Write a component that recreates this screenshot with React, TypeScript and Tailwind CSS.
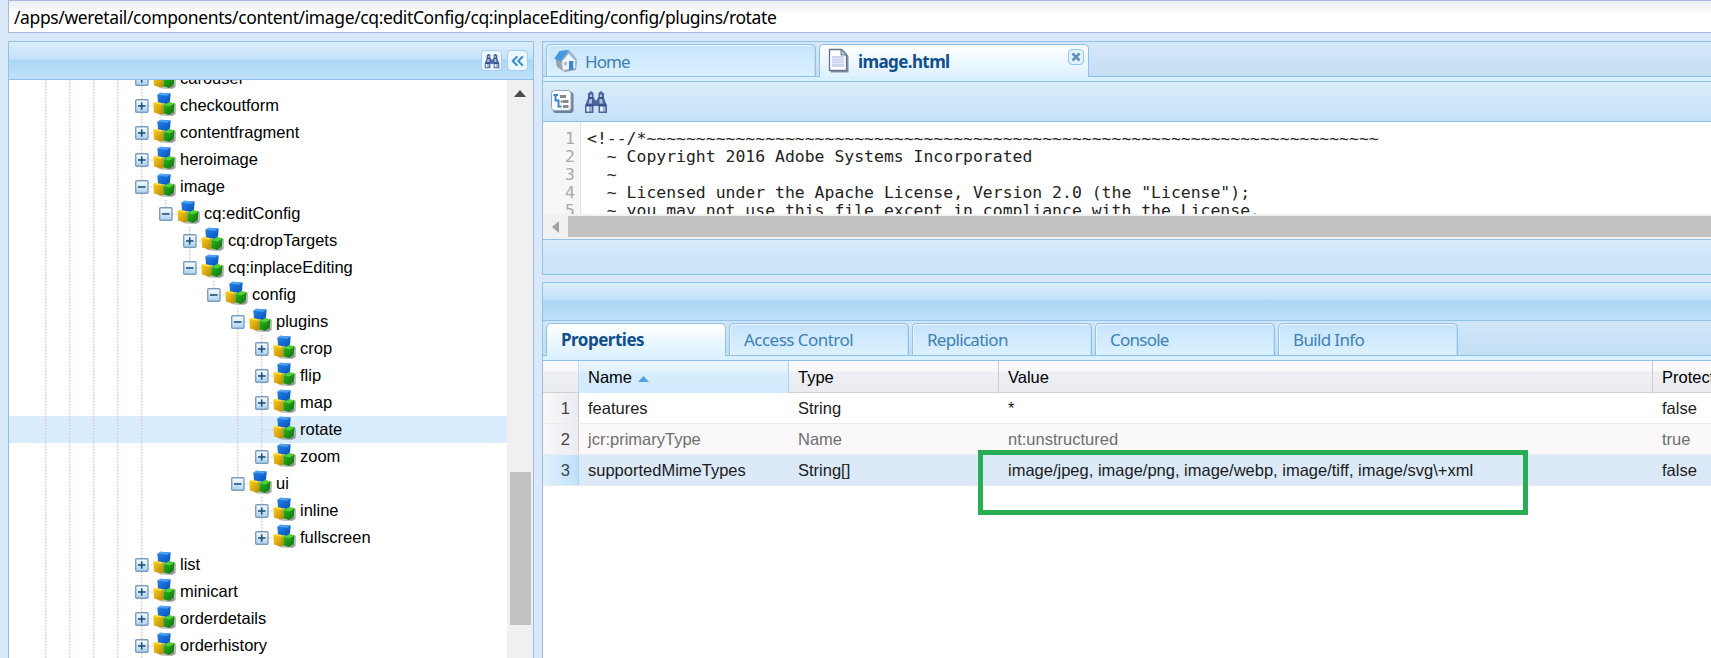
import { FiChevronsLeft } from "react-icons/fi";

type Cell = "empty" | "line" | "tee" | "end";

interface TreeRow {
  label: string;
  cells: Cell[];
  toggle?: "plus" | "minus";
  selected?: boolean;
}

const base: Cell[] = ["empty", "line", "line", "line", "line"];

const rows: TreeRow[] = [
  { label: "carousel", cells: [...base, "tee"], toggle: "plus" },
  { label: "checkoutform", cells: [...base, "tee"], toggle: "plus" },
  { label: "contentfragment", cells: [...base, "tee"], toggle: "plus" },
  { label: "heroimage", cells: [...base, "tee"], toggle: "plus" },
  { label: "image", cells: [...base, "tee"], toggle: "minus" },
  { label: "cq:editConfig", cells: [...base, "line", "end"], toggle: "minus" },
  { label: "cq:dropTargets", cells: [...base, "line", "empty", "tee"], toggle: "plus" },
  { label: "cq:inplaceEditing", cells: [...base, "line", "empty", "end"], toggle: "minus" },
  { label: "config", cells: [...base, "line", "empty", "empty", "end"], toggle: "minus" },
  { label: "plugins", cells: [...base, "line", "empty", "empty", "empty", "tee"], toggle: "minus" },
  { label: "crop", cells: [...base, "line", "empty", "empty", "empty", "line", "tee"], toggle: "plus" },
  { label: "flip", cells: [...base, "line", "empty", "empty", "empty", "line", "tee"], toggle: "plus" },
  { label: "map", cells: [...base, "line", "empty", "empty", "empty", "line", "tee"], toggle: "plus" },
  { label: "rotate", cells: [...base, "line", "empty", "empty", "empty", "line", "tee"], selected: true },
  { label: "zoom", cells: [...base, "line", "empty", "empty", "empty", "line", "end"], toggle: "plus" },
  { label: "ui", cells: [...base, "line", "empty", "empty", "empty", "end"], toggle: "minus" },
  { label: "inline", cells: [...base, "line", "empty", "empty", "empty", "empty", "tee"], toggle: "plus" },
  { label: "fullscreen", cells: [...base, "line", "empty", "empty", "empty", "empty", "end"], toggle: "plus" },
  { label: "list", cells: [...base, "tee"], toggle: "plus" },
  { label: "minicart", cells: [...base, "tee"], toggle: "plus" },
  { label: "orderdetails", cells: [...base, "tee"], toggle: "plus" },
  { label: "orderhistory", cells: [...base, "tee"], toggle: "plus" },
];

const codeLines = [
  "<!--/*" + "~".repeat(74),
  "  ~ Copyright 2016 Adobe Systems Incorporated",
  "  ~",
  '  ~ Licensed under the Apache License, Version 2.0 (the "License");',
  "  ~ you may not use this file except in compliance with the License.",
];

const properties = [
  { name: "features", type: "String", value: "*", isProtected: "false" },
  { name: "jcr:primaryType", type: "Name", value: "nt:unstructured", isProtected: "true" },
  {
    name: "supportedMimeTypes",
    type: "String[]",
    value: "image/jpeg, image/png, image/webp, image/tiff, image/svg\\+xml",
    isProtected: "false",
  },
];

const bottomTabs = [
  { label: "Access Control", spacing: "tracking-[-0.53px]" },
  { label: "Replication", spacing: "tracking-[-0.7px]" },
  { label: "Console", spacing: "tracking-[-0.75px]" },
  { label: "Build Info", spacing: "tracking-[-0.65px]" },
];

const TreeCell = ({ kind, toggle, last }: { kind: Cell; toggle?: "plus" | "minus"; last: boolean }) => (
  <svg width="24" height="27" viewBox="0 0 24 27" className="shrink-0">
    {kind !== "empty" && (
      <path
        d={kind === "end" ? "M12.7 0V14" : "M12.7 0V27"}
        stroke="#dcc3c8"
        strokeWidth="1.4"
        strokeDasharray="1.5 1.5"
      />
    )}
    {last && <path d="M13 14H24" stroke="#dcc3c8" strokeWidth="1.2" strokeDasharray="1.5 1.5" />}
    {last && toggle && (
      <>
        <rect x="6.7" y="7.7" width="12.3" height="12.6" rx="1" fill="url(#toggleFill)" stroke="#7c9dbb" strokeWidth="1.4" />
        <path d="M9 14H16.500" stroke="#1f5278" strokeWidth="1.6" />
        {toggle === "plus" && <path d="M12.7 10.300V17.700" stroke="#1f5278" strokeWidth="1.6" />}
      </>
    )}
  </svg>
);

const CubesIcon = () => (
  <svg width="24" height="27" viewBox="0 0 24 27" className="shrink-0">
    <ellipse cx="14" cy="21.500" rx="9" ry="2.400" fill="#444" opacity="0.35" />
    <path d="M20 10.500l3 1.500v8l-4 4-3-1z" fill="#444" opacity="0.35" />
    <path d="M0.300 11l3.200-1.200 7 .8v11l-2.500 1-7-2z" fill="url(#yellowCube)" />
    <path d="M0.300 11l3.200-1.200 7 .8-2.500 2.200z" fill="#ffe04a" />
    <path d="M10.300 13l4-3.200 7.200 1.700-.7 8-5 3.500-5.500-1.800z" fill="url(#greenCube)" />
    <path d="M10.300 13l4-3.200 7.200 1.700-5 3z" fill="#57cf3a" />
    <path d="M4.300 2.800l3.200-2.100 10.200.8-.7 8-4 2.300-8-1.500z" fill="url(#blueCube)" />
    <path d="M4.300 2.800l3.200-2.100 10.200.8-3.700 2.300z" fill="#4f9ff2" />
  </svg>
);

const BinocularsIcon = ({ size }: { size: number }) => (
  <svg width={size} height={size} viewBox="0 0 24 24">
    <path d="M7 1l2.500 2v4l2.500 4v5H9.500v7H1v-7l3-8V3.500zM17 1l3 2.500V8l3 8v7h-8.500v-7H12v-5l2.500-4V3z" fill="#4a659e" />
    <path d="M6 4.500h2V7H6zM16 4.500h2V7h-2zM5.500 9H8v4.500H4.500zM15.500 9H18l1 4.500h-3.500z" fill="#aebfe2" />
    <path d="M2.500 16.500h3v5h-3zM16 16.500h3v5h-3z" fill="#e4ecfb" />
    <path d="M5.500 16.500H8v5H5.500zM19 16.500h2.500v5H19z" fill="#9aafd9" />
    <path d="M4.500 8H9M15 8h4.500M1.500 15.200H9.500M14.500 15.200h8" stroke="#293f7c" strokeWidth="1.1" />
  </svg>
);

const HomeIcon = () => (
  <svg width="24" height="24" viewBox="0 0 24 24">
    <path d="M3 11v7l8 5 11-2 1-9z" fill="#5f666f" opacity="0.55" />
    <path d="M1.500 9l6.500 3v9l-5.500-4.500z" fill="#9aa3ae" />
    <path d="M7.500 12l7-7.500 7 6.500v8.500l-13 2z" fill="#f3f6fa" stroke="#a7b1bd" strokeWidth="0.8" />
    <path d="M0.300 9.500L5.500 2l9.500-1.200-8 11.700z" fill="#4597de" />
    <path d="M7 12.500L15 2.500l7.500 8.500" fill="none" stroke="#7fa9cf" strokeWidth="1.500" />
    <path d="M15 12h4.300v8.400l-4.300.6z" fill="#348bdc" />
    <path d="M10 13h3v3.500h-3z" fill="#b4c0ce" />
  </svg>
);

const FileIcon = () => (
  <svg width="22" height="25" viewBox="0 0 22 25">
    <path d="M3 2.500h12.500l5 5.500v16.500H3z" fill="#6d778a" opacity="0.8" />
    <path d="M1.500 1.500h12l5 5v16h-17z" fill="#fff" stroke="#65738c" strokeWidth="1.300" />
    <path d="M4 8h12v11H4z" fill="#ccd4ee" />
    <path d="M4 10.500h12M4 13h12M4 15.500h12" stroke="#e8ecf9" strokeWidth="0.8" />
    <path d="M13 1.500v5.500h5.500z" fill="#c4cede" stroke="#65738c" />
  </svg>
);

const TreeToolIcon = () => (
  <svg width="25" height="25" viewBox="0 0 25 25">
    <rect x="3" y="3" width="20.500" height="21" rx="3" fill="#5f6f88" opacity="0.85" />
    <rect x="1.500" y="1.500" width="19.500" height="20" rx="3" fill="#fafcff" stroke="#8ea3c0" />
    <path d="M3.500 6h4.500M5.500 6v5.500h4M8.500 11.500v6h3" stroke="#2d86d6" strokeWidth="1.900" fill="none" />
    <path d="M10 7.500h6M13 12.500h5.500M13 17.500h5.500" stroke="#8a8a8a" strokeWidth="2.800" />
    <path d="M10.500 12.500h2.500" stroke="#8a8a8a" strokeWidth="2" />
  </svg>
);

const SvgDefs = () => (
  <svg width="0" height="0" className="absolute">
    <defs>
      <linearGradient id="toggleFill" x1="0" y1="0" x2="0" y2="1">
        <stop offset="0" stopColor="#ffffff" />
        <stop offset="1" stopColor="#a9d1f0" />
      </linearGradient>
      <linearGradient id="blueCube" x1="0" y1="0" x2="1" y2="1">
        <stop offset="0" stopColor="#2287ee" />
        <stop offset="1" stopColor="#0a4fb4" />
      </linearGradient>
      <linearGradient id="yellowCube" x1="0" y1="0" x2="1" y2="1">
        <stop offset="0" stopColor="#ffd21c" />
        <stop offset="1" stopColor="#b98600" />
      </linearGradient>
      <linearGradient id="greenCube" x1="0" y1="0" x2="1" y2="1">
        <stop offset="0" stopColor="#2fc01e" />
        <stop offset="1" stopColor="#0c6e10" />
      </linearGradient>
    </defs>
  </svg>
);

const TreePanel = () => (
  <aside className="flex w-[526px] shrink-0 flex-col border border-b-0 border-[#90c2e8] bg-white">
    <div className="flex h-[38px] shrink-0 items-center justify-end gap-[5px] border-b border-[#90c2e8] bg-[linear-gradient(#dbeefc_0px,#c4e2f9_17px,#abd6f6_18px,#bfe2fa_37px)] pr-[5px]">
      <button className="flex size-[21px] items-center justify-center rounded-[4px] border border-[#a3cdf2] bg-[#ecf7ff]">
        <BinocularsIcon size={16} />
      </button>
      <button className="flex size-[21px] items-center justify-center rounded-[4px] border border-[#a3cdf2] bg-[#ecf7ff]">
        <FiChevronsLeft size={20} strokeWidth={2.8} className="text-[#3a92cf]" />
      </button>
    </div>
    <div className="flex min-h-0 flex-1 overflow-hidden">
      <ul className="-mt-[15px] flex-1">
        {rows.map((row) => (
          <li key={row.label} className={`flex h-[27px] items-center ${row.selected ? "bg-[#d9edff]" : ""}`}>
            {row.cells.map((cell, i) => (
              <TreeCell key={i} kind={cell} toggle={row.toggle} last={i === row.cells.length - 1} />
            ))}
            <CubesIcon />
            <span className="pl-[3px] text-[16.5px] leading-[27px]">{row.label}</span>
          </li>
        ))}
      </ul>
      <div className="flex w-[26px] flex-col items-center bg-[#f0f0f0]">
        <svg width="12" height="7" viewBox="0 0 12 7" className="mt-[10px]">
          <path d="M6 0l6 7H0z" fill="#4c4c4c" />
        </svg>
        <div className="mt-[375px] h-[153px] w-[21px] bg-[#c1c1c1]" />
      </div>
    </div>
  </aside>
);

const Editor = () => (
  <section className="flex h-[234px] shrink-0 flex-col border border-r-0 border-[#90c2e8]">
    <div className="flex h-[35px] shrink-0 items-end gap-[3px] border-b border-[#8abfe6] bg-linear-to-b from-[#d6e8f8] via-[#cee3f8] to-[#c4dff2] pl-[3px]">
      <div className="flex h-[32px] w-[270px] items-center rounded-t-[5px] border border-b-0 border-[#8fc1ea] bg-linear-to-b from-[#c6e4fc] to-[#dcf1ff] pl-[7px] text-[#4080b4] shadow-[inset_1px_1px_0_#ecf7ff,inset_-1px_0_0_#bfe0fa]">
        <HomeIcon />
        <span className="pt-[2px] pl-[7px] font-['Noto_Sans','Open_Sans',sans-serif] text-[17px] tracking-[-0.9px]">Home</span>
      </div>
      <div className="-mb-px flex h-[33px] w-[270px] rounded-t-[5px] border border-b-0 border-[#8fc1ea] bg-linear-to-b from-white to-[#dcf1ff] pl-[8px] text-[#0f4f8e]">
        <span className="pt-[3px]">
          <FileIcon />
        </span>
        <span className="flex-1 pl-[8px] font-['Noto_Sans','Open_Sans',sans-serif] text-[17px] leading-[33px] font-bold tracking-[-0.6px]">
          image.html
        </span>
        <span className="mt-[4px] mr-[4px] flex size-[16px] items-center justify-center rounded-[4px] border border-[#8fc7f0] bg-[#e4f3fd]">
          <svg width="10" height="10" viewBox="0 0 10 10">
            <path d="M1.500 1.500l7 7M8.500 1.500l-7 7" stroke="#5b91bd" strokeWidth="2.700" />
          </svg>
        </span>
      </div>
    </div>
    <div className="h-[5px] shrink-0 border-b border-[#8abfe6] bg-[#d9f1ff]" />
    <div className="flex h-[40px] shrink-0 items-center gap-[9px] border-b border-[#90c2e8] bg-linear-to-b from-[#d9edf9] via-[#d0e6fa] to-[#c5e1f6] pl-[7px]">
      <TreeToolIcon />
      <BinocularsIcon size={24} />
    </div>
    <div className="flex h-[92px] shrink-0 overflow-hidden bg-white font-['DejaVu_Sans_Mono','Liberation_Mono',monospace] text-[16.46px] leading-[18px] text-[#222]">
      <div className="flex w-[38px] flex-col border-r border-[#e4e4e4] bg-[#f7f7f7] pt-[8px] pr-[5px] text-right text-[#a8a8a8]">
        {codeLines.map((_, i) => (
          <span key={i}>{i + 1}</span>
        ))}
      </div>
      <div className="flex flex-col pt-[8px] pl-[6px]">
        {codeLines.map((line, i) => (
          <span key={i} className="whitespace-pre">
            {line}
          </span>
        ))}
      </div>
    </div>
    <div className="flex h-[26px] shrink-0 items-center border-b border-[#90c2e8] bg-[#f1f1f1]">
      <div className="flex w-[25px] justify-center">
        <svg width="7" height="12" viewBox="0 0 7 12">
          <path d="M7 0v12L0 6z" fill="#a3a3a3" />
        </svg>
      </div>
      <div className="h-[21px] flex-1 bg-[#c1c1c1]" />
    </div>
    <div className="flex-1 bg-linear-to-b from-[#d9edfa] via-[#cfe5fa] to-[#c9e4f7]" />
  </section>
);

const PropertiesPanel = () => (
  <section className="flex min-h-0 flex-1 flex-col border border-r-0 border-b-0 border-[#90c2e8] bg-white">
    <div className="h-[38px] shrink-0 border-b border-[#90c2e8] bg-[linear-gradient(#dbeefc_0px,#c4e2f9_16px,#abd6f6_18px,#bfe2fa_37px)]" />
    <div className="flex h-[35px] shrink-0 items-end gap-[3px] border-b border-[#8abfe6] bg-linear-to-b from-[#d2e6f8] to-[#c1dff6] pl-[3px] font-['Noto_Sans','Open_Sans',sans-serif] text-[17px] text-[#4080b4]">
      <div className="-mb-px flex h-[33px] w-[180px] items-center rounded-t-[5px] border border-b-0 border-[#8fc1ea] bg-linear-to-b from-white to-[#dcf1ff] pl-[14px] font-bold tracking-[-0.5px] text-[#0f4f8e]">
        Properties
      </div>
      {bottomTabs.map((tab) => (
        <div
          key={tab.label}
          className={`flex h-[32px] w-[180px] items-center rounded-t-[5px] border border-b-0 border-[#8fc1ea] bg-linear-to-b from-[#c6e4fc] to-[#dcf1ff] pt-px pl-[14px] shadow-[inset_1px_1px_0_#ecf7ff,inset_-1px_0_0_#bfe0fa] ${tab.spacing}`}
        >
          {tab.label}
        </div>
      ))}
    </div>
    <div className="h-[5px] shrink-0 border-b border-[#8abfe6] bg-[#dcf1ff]" />
    <div className="grid h-[32px] shrink-0 grid-cols-[36px_210px_210px_654px_1fr] border-b border-[#d8cdd1] bg-[linear-gradient(#fbf9fa_0px,#f9f8fa_10px,#eef0f5_11px,#e9ebf1_31px)] text-[16.5px] leading-[32px]">
      <div className="border-r border-[#c6d9ea]" />
      <div className="flex items-center gap-[6px] border-r border-[#a9d5f3] bg-[linear-gradient(#ebf6ff_0px,#e3f3ff_10px,#d6ecfd_12px,#d3ebfd_31px)] pl-[9px]">
        Name
        <svg width="11" height="6" viewBox="0 0 11 6" className="mt-[3px]">
          <path d="M5.500 0L11 6H0z" fill="#4da3df" />
        </svg>
      </div>
      <div className="border-r border-[#d4c9ce] pl-[9px]">Type</div>
      <div className="border-r border-[#d4c9ce] pl-[9px]">Value</div>
      <div className="overflow-hidden pl-[9px]">Protected</div>
    </div>
    {properties.map((prop, i) => (
      <div
        key={prop.name}
        className={`grid h-[31px] shrink-0 grid-cols-[36px_210px_210px_654px_1fr] border-b border-[#ececec] text-[16.5px] leading-[30px] ${
          i === 2 ? "bg-[#dbe9f9] text-[#1c1c1c]" : i === 1 ? "bg-[#faf8f9] text-[#6f6f6f]" : "bg-white text-[#1c1c1c]"
        }`}
      >
        <div
          className={`border-r pr-[8px] text-right text-[#444] ${
            i === 2 ? "border-[#a9d5f3] bg-linear-to-r from-[#e0f0fe] to-[#bfe2fa]" : "border-[#d4c9ce] bg-linear-to-r from-[#faf8f9] to-[#e9ecf2]"
          }`}
        >
          {i + 1}
        </div>
        <div className="pl-[9px]">{prop.name}</div>
        <div className="pl-[9px]">{prop.type}</div>
        <div className="pl-[9px]">{prop.value}</div>
        <div className="pl-[9px]">{prop.isProtected}</div>
      </div>
    ))}
  </section>
);

const App = () => {
  return (
    <div className="relative flex h-[658px] w-[1711px] flex-col overflow-hidden bg-[#dae9fa] pl-[8px] font-['Liberation_Sans',Arial,sans-serif] text-black">
      <SvgDefs />
      <div className="flex h-[33px] shrink-0 items-center border border-r-0 border-[#a9b8dc] bg-[linear-gradient(#e9eff1_0px,#ffffff_14px)] pl-[5px] pt-px font-['Noto_Sans','Open_Sans',sans-serif] text-[17.5px] whitespace-nowrap tracking-[-0.385px]">
        /apps/weretail/components/content/image/cq:editConfig/cq:inplaceEditing/config/plugins/rotate
      </div>
      <div className="mt-[8px] flex min-h-0 flex-1 gap-[8px]">
        <TreePanel />
        <main className="flex min-w-0 flex-1 flex-col gap-[7px]">
          <Editor />
          <PropertiesPanel />
        </main>
      </div>
      {/* Highlight frame over the mime types value */}
      <div className="absolute top-[450px] left-[978px] h-[65px] w-[550px] border-5 border-[#27ae52]" />
    </div>
  );
};

export default App;
